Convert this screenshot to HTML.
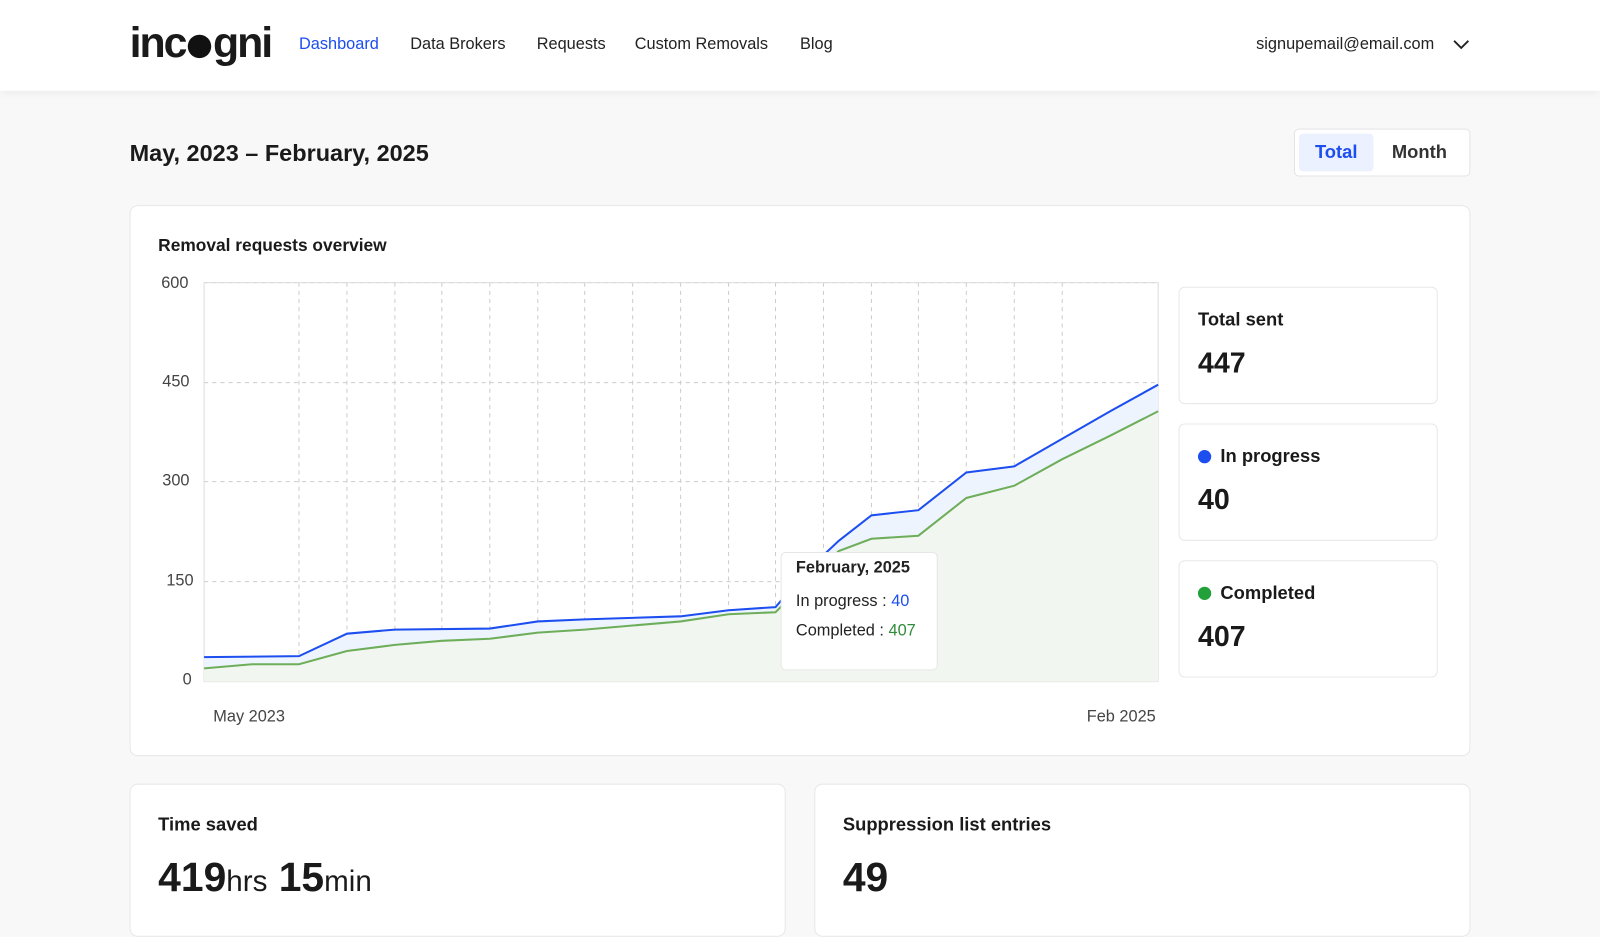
<!DOCTYPE html>
<html><head><meta charset="utf-8"><style>
*{margin:0;padding:0;box-sizing:border-box}
body{width:1600px;height:904px;overflow:hidden;background:#f8f8f8;font-family:"Liberation Sans",sans-serif;color:#1a1a1a;position:relative}
#w{position:absolute;left:0;top:0;width:1568px;height:886px;transform:scale(1.020408);transform-origin:0 0}
.hdr{position:absolute;left:0;top:0;width:1568px;height:89px;background:#fff;box-shadow:0 2px 8px rgba(0,0,0,.05)}
.logo{position:absolute;left:127px;top:18px;font-size:42px;font-weight:bold;letter-spacing:-2px}
.nav{position:absolute;top:35px;font-size:16px;color:#222}
.card{position:absolute;background:#fff;border:1px solid #e8e8e8;border-radius:8px}
.t{position:absolute;font-size:18px;font-weight:bold}
.stat{position:absolute;left:1155px;width:254px;height:115px;background:#fff;border:1px solid #e8e8e8;border-radius:6px}
.stat .l{position:absolute;left:18px;top:21px;font-size:18px;font-weight:bold}
.stat .v{position:absolute;left:18px;top:58px;font-size:28px;font-weight:bold}
.dot{display:inline-block;width:13px;height:13px;border-radius:50%;margin-right:9px;vertical-align:-1px}
.ax{position:absolute;font-size:16px;color:#444}
</style></head><body><div id="w">
<div class="hdr">
<div class="logo">inc<span style="display:inline-block;width:23px;height:23px;background:#111;border-radius:50%;vertical-align:-1px;margin:0 2px"></span>gni</div>
<div class="nav" style="left:293px;color:#1c4ef0">Dashboard</div>
<div class="nav" style="left:402px">Data Brokers</div>
<div class="nav" style="left:526px">Requests</div>
<div class="nav" style="left:622px">Custom Removals</div>
<div class="nav" style="left:784px">Blog</div>
<div class="nav" style="left:1231px">signupemail@email.com</div>
<svg style="position:absolute;left:1424px;top:38px" width="16" height="12"><path d="M1 2l7 7 7-7" fill="none" stroke="#222" stroke-width="1.8"/></svg>
</div>
<div class="t" style="left:127px;top:137px;font-size:23px">May, 2023 – February, 2025</div>
<div style="position:absolute;left:1268px;top:126px;width:173px;height:47px;background:#fff;border:1px solid #e4e4e4;border-radius:5px">
<div style="position:absolute;left:4px;top:4px;width:73px;height:37px;background:#ebf1fe;border-radius:4px;color:#1c4ef0;font-weight:bold;font-size:18px;text-align:center;line-height:37px">Total</div>
<div style="position:absolute;left:95px;top:4px;font-weight:bold;font-size:18px;line-height:37px;color:#333">Month</div>
</div>
<div class="card" style="left:127px;top:201px;width:1314px;height:540px"></div>
<div class="t" style="left:155px;top:231px;font-size:17px">Removal requests overview</div>
<div class="ax" style="left:158px;top:269px">600</div>
<div class="ax" style="left:159px;top:366px">450</div>
<div class="ax" style="left:159px;top:463px">300</div>
<div class="ax" style="left:163px;top:561px">150</div>
<div class="ax" style="left:179px;top:658px">0</div>
<div class="ax" style="left:209px;top:694px">May 2023</div>
<div class="ax" style="left:1065px;top:694px">Feb 2025</div>
<svg style="position:absolute;left:0;top:0" width="1568" height="886">
<g stroke="#ccc" stroke-dasharray="4 4" stroke-width="1">
<line x1="200" y1="277" x2="1135" y2="277"/><line x1="200" y1="375" x2="1135" y2="375"/><line x1="200" y1="472" x2="1135" y2="472"/><line x1="200" y1="570" x2="1135" y2="570"/>
<line x1="293" y1="277" x2="293" y2="668"/><line x1="340" y1="277" x2="340" y2="668"/><line x1="387" y1="277" x2="387" y2="668"/><line x1="433" y1="277" x2="433" y2="668"/><line x1="480" y1="277" x2="480" y2="668"/><line x1="527" y1="277" x2="527" y2="668"/><line x1="573" y1="277" x2="573" y2="668"/><line x1="620" y1="277" x2="620" y2="668"/><line x1="667" y1="277" x2="667" y2="668"/><line x1="714" y1="277" x2="714" y2="668"/><line x1="760" y1="277" x2="760" y2="668"/><line x1="807" y1="277" x2="807" y2="668"/><line x1="854" y1="277" x2="854" y2="668"/><line x1="900" y1="277" x2="900" y2="668"/><line x1="947" y1="277" x2="947" y2="668"/><line x1="994" y1="277" x2="994" y2="668"/><line x1="1041" y1="277" x2="1041" y2="668"/>
</g>
<rect x="200" y="277" width="935" height="391" fill="none" stroke="#ddd"/>
<path d="M200 644L293 643L340 621L387 617L480 616L527 609L573 607L667 604L714 598L760 595L790 560L822 530L854 505L900 500L947 463L994 457L1041 430L1088 403L1135 377L1135 403L1088 427L1041 450L994 476L947 488L900 525L854 528L822 540L790 570L760 600L714 602L667 609L620 613L573 617L527 620L480 626L433 628L387 632L340 638L293 651L247 651L200 655Z" fill="#eef4fe"/>
<path d="M200 655L247 651L293 651L340 638L387 632L433 628L480 626L527 620L573 617L620 613L667 609L714 602L760 600L790 570L822 540L854 528L900 525L947 488L994 476L1041 450L1088 427L1135 403L1135 668L200 668Z" fill="#f1f7f0"/>
<path d="M200 655L247 651L293 651L340 638L387 632L433 628L480 626L527 620L573 617L620 613L667 609L714 602L760 600L790 570L822 540L854 528L900 525L947 488L994 476L1041 450L1088 427L1135 403" fill="none" stroke="#6eae5a" stroke-width="2"/>
<path d="M200 644L293 643L340 621L387 617L480 616L527 609L573 607L667 604L714 598L760 595L790 560L822 530L854 505L900 500L947 463L994 457L1041 430L1088 403L1135 377" fill="none" stroke="#1c4ef0" stroke-width="2"/>
</svg>
<div style="position:absolute;left:765px;top:541px;width:154px;height:116px;background:#fff;border:1px solid #e6e6e6;border-radius:5px;font-size:16px;color:#222">
<div style="position:absolute;left:14px;top:5px;font-weight:bold;line-height:20px">February, 2025</div>
<div style="position:absolute;left:14px;top:39px">In progress : <span style="color:#1c4ef0">40</span></div>
<div style="position:absolute;left:14px;top:68px">Completed : <span style="color:#2e8b3a">407</span></div>
</div>
<div class="stat" style="top:281px"><div class="l">Total sent</div><div class="v">447</div></div>
<div class="stat" style="top:415px"><div class="l"><span class="dot" style="background:#1c4ef0"></span>In progress</div><div class="v">40</div></div>
<div class="stat" style="top:549px"><div class="l"><span class="dot" style="background:#22a03a"></span>Completed</div><div class="v">407</div></div>
<div class="card" style="left:127px;top:768px;width:643px;height:150px"></div>
<div class="card" style="left:798px;top:768px;width:643px;height:150px"></div>
<div class="t" style="left:155px;top:798px">Time saved</div>
<div class="t" style="left:826px;top:798px">Suppression list entries</div>
<div style="position:absolute;left:155px;top:838px;font-size:40px;font-weight:bold">419<span style="font-size:29px;font-weight:normal">hrs</span> 15<span style="font-size:29px;font-weight:normal">min</span></div>
<div style="position:absolute;left:826px;top:838px;font-size:40px;font-weight:bold">49</div>
</div></body></html>
